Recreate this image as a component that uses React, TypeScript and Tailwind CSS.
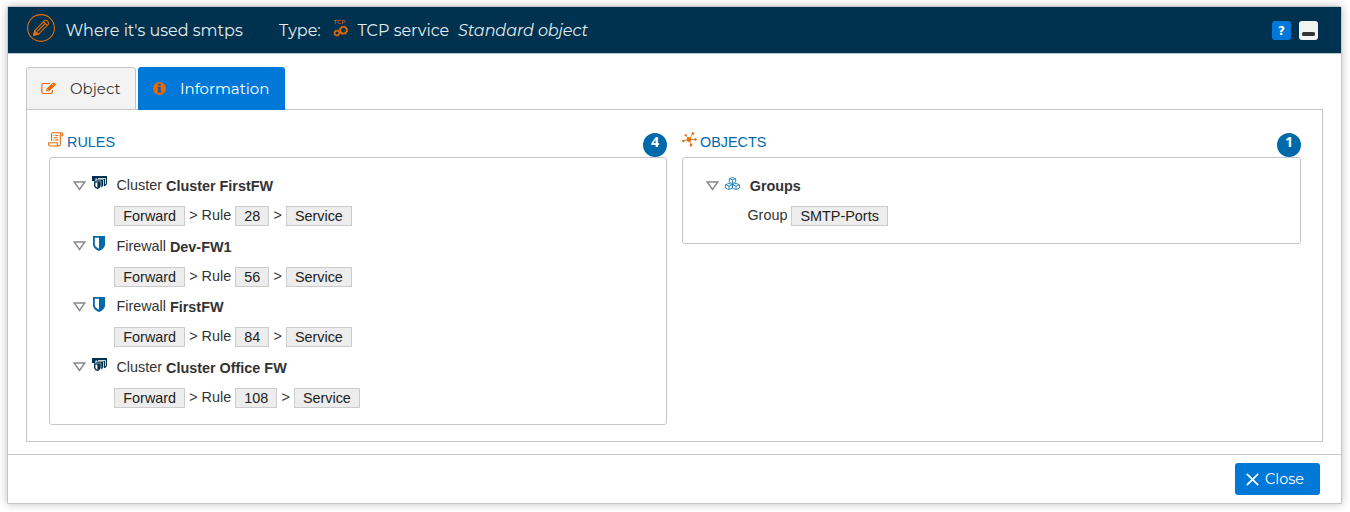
import type { ReactNode } from "react";

const brand = "font-[Montserrat,Inter,sans-serif]";

function ShieldIcon() {
  return (
    <svg width="12" height="15" viewBox="0 0 12 15">
      <path d="M0 0h12v8.500c0 3-3 5.300-6 6.500-3-1.200-6-3.500-6-6.500z" fill="#0069aa" />
      <path d="M1.800 1.800H6v11C3.500 11.500 1.800 10 1.800 8z" fill="#fff" />
    </svg>
  );
}

function ClusterIcon() {
  return (
    <svg width="15" height="14" viewBox="0 0 15 14">
      <path d="M0 0h15v7c0 1.500-1 2.500-3 3.300V4H5V2.500H3.500V5H0z" fill="#00324f" />
      <path d="M6 2.500h7.500V8" fill="none" stroke="#fff" strokeWidth=".8" />
      <path d="M4 3.500h7.500v5c0 1.600-.8 2.500-2.500 3.300V5H4z" fill="#00324f" stroke="#fff" strokeWidth=".5" />
      <path d="M2 5.200h6.700v4c0 1.800-1.200 3-3.300 3.900C3.200 12.200 2 11 2 9.200z" fill="#00324f" />
      <path d="M3.400 6.400h2v5.300c-1.300-.6-2-1.400-2-2.500z" fill="#fff" />
    </svg>
  );
}

function Triangle() {
  return (
    <svg width="13" height="10" viewBox="0 0 13 10">
      <path d="M1.200 1h10.600L6.500 8.500z" fill="none" stroke="#888" strokeWidth="1.400" />
    </svg>
  );
}

function Chip({ children }: { children: ReactNode }) {
  return (
    <span className="flex h-5 items-center border border-[#ccc] bg-[#ededed] px-2 leading-[18px] text-[#222]">
      {children}
    </span>
  );
}

function Entry({ kind, name, rule }: { kind: string; name: string; rule: string }) {
  return (
    <div className="h-[60.6px]">
      <div className="flex h-[30.3px] items-center">
        <div className="w-[19px]"><Triangle /></div>
        <div className={kind === "Cluster" ? "w-[24.4px] pb-[5px]" : "w-[24.4px] pb-[5px] pl-px"}>
          {kind === "Cluster" ? <ClusterIcon /> : <ShieldIcon />}
        </div>
        <span className="mr-1 pt-[0.6px]">{kind}</span>
        <b className="pt-[2.6px]">{name}</b>
      </div>
      <div className="flex h-[30.3px] items-center gap-[4.1px] pl-[41.3px]">
        <Chip>Forward</Chip>
        <span>&gt; Rule</span>
        <Chip>{rule}</Chip>
        <span>&gt;</span>
        <Chip>Service</Chip>
      </div>
    </div>
  );
}

function Section({ icon, title, count, children }: { icon: ReactNode; title: string; count: string; children: ReactNode }) {
  return (
    <section>
      <div className="flex h-6 items-start">
        <div className="w-[18px]">{icon}</div>
        <span className="leading-[18px] text-[#0069aa]">{title}</span>
        <span className="ml-auto flex size-6 justify-center rounded-full bg-[#0069aa] font-['Open_Sans',sans-serif] text-[14.4px] font-bold leading-[18px] text-white">
          {count}
        </span>
      </div>
      <div className="rounded-[3px] border border-[#c6c6c6]">{children}</div>
    </section>
  );
}

function RulesIcon() {
  return (
    <svg className="-mt-px -ml-px" width="16" height="15" viewBox="0 0 16 15" fill="none" stroke="#ea6903" strokeWidth="1.100">
      <path d="M3.500 9V2.500C3.500 1.200 4 .7 5 .7h8.200c2 0 1.700 2.800 1.200 3.100h-2.100V12c0 1.500-.7 2-1.500 2H2c-1.800 0-1.500-2.500-1.200-3.300h8.500V12c0 1.200.5 2 1.500 2M12.300 3.800V2c0-.8.300-1.300 1-1.300M5.300 3.500h1M7.300 3.500h3M5.300 5.700h4.500M5.300 7.900h1M7.300 7.900h3" />
    </svg>
  );
}

function NetworkIcon() {
  return (
    <svg className="-mt-px" width="15" height="15" viewBox="0 0 15 15" fill="#ea6903" stroke="#ea6903" strokeWidth=".8">
      <path d="M7 7.500 1.300 9M7 7.500 3.800 3.300M7 7.500 10.800 1.500M7 7.500h6.500M7 7.500 9 13" />
      <circle cx="7" cy="7.500" r="2" />
      <circle cx="1.400" cy="9" r=".9" /><circle cx="3.700" cy="3.200" r=".8" /><circle cx="10.900" cy="1.500" r="1" /><circle cx="13.500" cy="7.500" r=".9" /><circle cx="9" cy="13.200" r="1" />
    </svg>
  );
}

function CubesIcon() {
  return (
    <svg width="15" height="13" viewBox="0 0 15 13" fill="none" stroke="#0875ad" strokeWidth=".8">
      <path d="m7.500.5 3.200 1.200v3.500L7.500 6.600 4.300 5.200V1.700zM4.300 1.700l3.200 1.200 3.200-1.200M7.500 2.900v3.700" />
      <path d="m4 6.400 3.400 1.300v3.400L4 12.500.5 11.100V7.700zM.5 7.700 4 9l3.400-1.300M4 9v3.500" />
      <path d="m11 6.400 3.500 1.300v3.400L11 12.500l-3.500-1.400V7.700zM7.500 7.700 11 9l3.500-1.300M11 9v3.500" />
    </svg>
  );
}

function PencilIcon() {
  return (
    <svg width="28" height="28" viewBox="0 0 28 28" fill="none" stroke="#ea6903" strokeWidth="1.100">
      <circle cx="14" cy="14" r="13.400" />
      <path d="m6.700 21.200 1.100-4.700L17.600 6.700q1-1 2.200 0l1.500 1.500q1 1 0 2.200l-9.700 9.700zM16.600 7.800l3.700 3.700M10.300 17.500l7.500-7.500" />
      <path d="m6.700 21.200 1-4.500 3.800 3.500z" fill="#ea6903" />
    </svg>
  );
}

function TcpIcon() {
  return (
    <svg width="16" height="18" viewBox="0 0 16 18">
      <text x=".5" y="5" fontSize="5.800" fontWeight="500" fill="#ea6903" fontFamily="Montserrat, Inter, sans-serif" textLength="12">TCP</text>
      <g fill="none" stroke="#ea6903">
        <circle cx="4" cy="14" r="2.300" strokeWidth="1.400" />
        <circle cx="4" cy="14" r="3.300" strokeWidth=".8" strokeDasharray="1.300 1.300" />
        <circle cx="10.500" cy="11.300" r="3.200" strokeWidth="1.500" />
        <circle cx="10.500" cy="11.300" r="4.300" strokeWidth=".9" strokeDasharray="1.700 1.700" />
      </g>
    </svg>
  );
}

function EditIcon() {
  return (
    <svg width="16" height="13" viewBox="0 0 15 13" preserveAspectRatio="none">
      <path d="M8.500 1.500h-6Q.8 1.500.8 3.200v6.600q0 1.700 1.700 1.700H9q1.700 0 1.700-1.700V8" fill="none" stroke="#ea6903" strokeWidth="1.100" />
      <path d="m5 6.800 6-6q.6-.6 1.300 0l1.300 1.300q.6.600 0 1.200l-6 6H5z" fill="#ea6903" />
      <path d="m5.700 7.100 1.500 1.500M10.300 2l2 2" stroke="#f3f3f3" strokeWidth=".6" />
    </svg>
  );
}

function InfoIcon() {
  return (
    <svg width="13" height="13" viewBox="0 0 12 12">
      <circle cx="6" cy="6" r="6" fill="#ea6903" />
      <path d="M4.800 1.700h2.300v1.800H4.800zM4.100 4.600h3v3.900h.9v1.100H4.100V8.500h.7V5.700h-.7z" fill="#0a5fae" />
    </svg>
  );
}

export default function App() {
  return (
    <div className="h-[512px] w-[1350px] overflow-hidden bg-white pl-[7px] pt-1.5 font-['Liberation_Sans',sans-serif] text-[14.4px] text-[#333]">
      <div className="flex h-[498px] w-[1335px] flex-col rounded-t-[2px] border border-[#c3c5c7] bg-white shadow-[0_0_8px_rgba(0,0,0,0.25)]">
        <header className={`flex h-[47px] shrink-0 items-center border-b border-[#b8c4cb] bg-[#00324f] pl-[19px] pr-[23px] text-[16px] text-[#e4ebef] ${brand}`}>
          <div className="w-[38.6px] pb-[5px]"><PencilIcon /></div>
          <span className="w-[213.4px] whitespace-nowrap pt-0.5">Where it's used smtps</span>
          <span className="w-[54px] whitespace-nowrap pt-0.5">Type:</span>
          <div className="w-[24.6px] pb-1"><TcpIcon /></div>
          <span className="w-[100.4px] whitespace-nowrap pt-0.5">TCP service</span>
          <i className="whitespace-nowrap pt-0.5 tracking-[-0.08px]">Standard object</i>
          <div className="ml-auto flex gap-2">
            <span className="flex size-[19px] items-center justify-center rounded-[3px] bg-[#0078d8] pt-px font-['DejaVu_Sans',sans-serif] text-[12px] font-bold text-white">?</span>
            <span className="flex size-[19px] items-end justify-center rounded-[3px] bg-[#f3f3f3] pb-1"><span className="h-1 w-[13px] rounded-[1.5px] bg-[#333]" /></span>
          </div>
        </header>
        <main className="flex grow flex-col px-[18px] pb-3 pt-[13px]">
          <nav className={`relative -mb-px flex h-[43px] shrink-0 gap-0.5 text-[15px] ${brand}`}>
            <div className="flex w-[110px] items-center rounded-t-[3px] border border-[#c6c6c6] bg-[#f3f3f3] pl-3.5">
              <span className="w-[29px]"><EditIcon /></span>
              <span className="pt-0.5">Object</span>
            </div>
            <div className="flex w-[147px] items-center rounded-t-[3px] bg-[#0078d8] pl-[15px] text-white">
              <span className="w-[27px]"><InfoIcon /></span>
              <span className="pt-0.5">Information</span>
            </div>
          </nav>
          <div className="grid grow grid-cols-[618px_619px] items-start gap-[15px] border border-[#c6c6c6] pl-[22px] pt-[23px]">
            <Section icon={<RulesIcon />} title="RULES" count="4">
              <div className="h-[266px] pl-[23px] pt-[12.5px]">
                <Entry kind="Cluster" name="Cluster FirstFW" rule="28" />
                <Entry kind="Firewall" name="Dev-FW1" rule="56" />
                <Entry kind="Firewall" name="FirstFW" rule="84" />
                <Entry kind="Cluster" name="Cluster Office FW" rule="108" />
              </div>
            </Section>
            <Section icon={<NetworkIcon />} title="OBJECTS" count="1">
              <div className="h-[85px] pl-[23px] pt-[12.5px]">
                <div className="flex h-[30.3px] items-center">
                  <div className="w-[19px]"><Triangle /></div>
                  <div className="w-[24.7px] pb-[5px]"><CubesIcon /></div>
                  <b className="pt-[2.6px]">Groups</b>
                </div>
                <div className="flex h-[30.3px] items-center gap-[4.1px] pl-[41.4px]">
                  <span>Group</span>
                  <Chip>SMTP-Ports</Chip>
                </div>
              </div>
            </Section>
          </div>
        </main>
        <footer className="flex h-[49px] shrink-0 items-center justify-end border-t border-[#c6c6c6] pr-[21px]">
          <button className={`flex h-8 w-[85px] items-center rounded-[3px] bg-[#0078d8] pl-[11px] text-[14.5px] text-white ${brand}`}>
            <svg className="mr-1.5" width="13" height="13" viewBox="0 0 13 13"><path d="m.8.8 11.400 11.400M12.200.8.8 12.200" stroke="#fff" strokeWidth="1.700" /></svg>
            <span className="pt-px">Close</span>
          </button>
        </footer>
      </div>
    </div>
  );
}
